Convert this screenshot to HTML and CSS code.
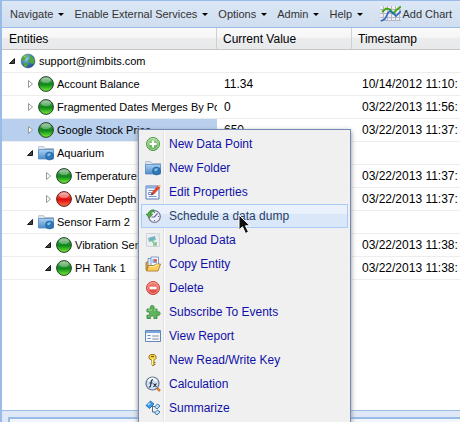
FILE: index.html
```html
<!DOCTYPE html>
<html lang="en">
<head>
<meta charset="utf-8">
<title>Entities</title>
<link rel="stylesheet" href="styles.css">
</head>
<body>
<svg class="defs" aria-hidden="true">
  <defs>
    <linearGradient id="gGreen" x1="0" y1="0" x2="0" y2="1"><stop offset="0" stop-color="#8fc08f"/><stop offset=".4" stop-color="#1d8a2a"/><stop offset=".55" stop-color="#0f8a1a"/><stop offset="1" stop-color="#7af23a"/></linearGradient>
    <linearGradient id="gRed" x1="0" y1="0" x2="0" y2="1"><stop offset="0" stop-color="#f5a09a"/><stop offset=".4" stop-color="#e62a20"/><stop offset=".55" stop-color="#e00c08"/><stop offset="1" stop-color="#ff7a50"/></linearGradient>
    <linearGradient id="gFolder" x1="0" y1="0" x2="0" y2="1"><stop offset="0" stop-color="#a9d0f2"/><stop offset="1" stop-color="#4a8ccc"/></linearGradient>
    <radialGradient id="gSea" cx=".35" cy=".3" r=".8"><stop offset="0" stop-color="#a8d4f4"/><stop offset=".5" stop-color="#3f80c0"/><stop offset="1" stop-color="#1b3f78"/></radialGradient>
    <linearGradient id="gAdd" x1="0" y1="0" x2="0" y2="1"><stop offset="0" stop-color="#a5d895"/><stop offset="1" stop-color="#4fa84a"/></linearGradient>
    <linearGradient id="gDel" x1="0" y1="0" x2="0" y2="1"><stop offset="0" stop-color="#f58a80"/><stop offset="1" stop-color="#d93a32"/></linearGradient>
    <symbol id="green" viewBox="0 0 16 16"><circle cx="8" cy="8" r="7.4" fill="url(#gGreen)" stroke="#26402a" stroke-width="1"/><ellipse cx="8" cy="4.2" rx="4.8" ry="2.8" fill="#fff" opacity=".3"/></symbol>
    <symbol id="red" viewBox="0 0 16 16"><circle cx="8" cy="8" r="7.4" fill="url(#gRed)" stroke="#5c2020" stroke-width="1"/><ellipse cx="8" cy="4.2" rx="4.8" ry="2.8" fill="#fff" opacity=".35"/></symbol>
    <symbol id="folder" viewBox="0 0 16 16"><path d="M.5 14V1.500h5L7 3h8.500V14z" fill="#8294a8"/><path d="M1 2h4.500L7 3.500h8V5H1z" fill="#dce4ec"/><path d="M.5 4.500h15V14H.5z" fill="url(#gFolder)" stroke="#5a8cbc" stroke-width=".8"/><circle cx="11.500" cy="11" r="4" fill="#2e78b8" stroke="#1d5a96" stroke-width=".6"/><path d="M9 9.500q2-2 4-1l-1 2-2 1z" fill="#83bde8"/></symbol>
    <symbol id="globe" viewBox="0 0 16 16"><circle cx="8" cy="8" r="7" fill="url(#gSea)" stroke="#4a6a90" stroke-width=".5"/><path d="M3 3.500 6 1.500l2 1-1 2-2 1.500-.5 2L2 8 1.300 6zM9 2l3 1.500L14.500 7l-.5 3-2 1.500-1.500-2-2-.5L8 7l2-1.500zM4 9.500l3 .5 1 1.500-2 3-2-1.500z" fill="#4fa838"/><path d="M3.500 4 6 2.200l1 .5-2 2z" fill="#9ad470"/></symbol>
    <symbol id="open" viewBox="0 0 16 16"><path d="M10.500 5.500v5h-5z" fill="#444" stroke="#1a1a1a" stroke-width="1" stroke-linejoin="round"/></symbol>
    <symbol id="closed" viewBox="0 0 16 16"><path d="M6.500 4.500v7L10.500 8z" fill="#fff" stroke="#999" stroke-width="1"/></symbol>
    <symbol id="chart" viewBox="0 0 22 16"><path d="M1 0h21v15H1z" fill="#eee"/><path d="M4.500 0v15M8.500 0v15M12.500 0v15M16.500 0v15M20.500 0v15M1 3.500h21M1 7.500h21M1 11.500h21M1 14.500h21" stroke="#b4b4cc" stroke-width="1" fill="none"/><path d="M3 6 7 2.500l4 1 3 4 4-4 4-3" fill="none" stroke="#48a818" stroke-width="2"/><path d="m2 15 4-2 3-6 2-2 3 2 3 3 2-2 3-3" fill="none" stroke="#2468c0" stroke-width="1.600"/></symbol>
    <symbol id="add" viewBox="0 0 16 16"><circle cx="8" cy="8" r="6.500" fill="url(#gAdd)" stroke="#50984a" stroke-width="1"/><circle cx="8" cy="8" r="5.400" fill="none" stroke="#c8e8bc" stroke-width=".7"/><path d="M8 4.500v7M4.500 8h7" stroke="#fff" stroke-width="2.200"/></symbol>
    <symbol id="edit" viewBox="0 0 16 16"><path d="M1 2h13v13H1z" fill="#f4f8ff" stroke="#5279b8" stroke-width="1"/><path d="M1.500 2.500h12v2h-12z" fill="#86a9e0"/><path d="M3.500 6.500h6M3.500 12.500h8" stroke="#7896cc"/><path d="M3.500 8.500h3v2h-3z" fill="none" stroke="#7896cc"/><path d="m6.500 11 .8-2.800 5.500-6.200 2 1.500-5.500 6.200z" fill="#ea4a2a" stroke="#b03018" stroke-width=".5"/><path d="m12.500 2.300 1.200-1.300h1.800v1.300l-1 1.200z" fill="#ffae8a"/><path d="m6.300 11.300.6-2 1.500 1z" fill="#333"/></symbol>
    <symbol id="clock" viewBox="0 0 16 16"><circle cx="9.500" cy="8.500" r="5.800" fill="#f1f1fa" stroke="#7c7c9e" stroke-width="1.300"/><path d="M9.500 4v1M9.500 12v1M13 8.500h1M12.500 5.500 9.500 9h-3" stroke="#6868a0" stroke-width="1.200" fill="none"/><path d="M1 6h2C3.500 3 6 1.500 9 1.800v2C7 3.600 6 4.500 5.800 6h2L4.300 10z" fill="#54a842" stroke="#2d7828" stroke-width=".6"/></symbol>
    <symbol id="upload" viewBox="0 0 16 16"><path d="M1.500 1.500h13v13h-13z" fill="#eceff2" stroke="#d2d5d8"/><path d="M10 1.500h4.500V6z" fill="#d9e2ea"/><path d="m3 6 7-2 1 4-7 2z" fill="#79bda8"/><path d="m4.500 6 4-1 .5 2-4 1z" fill="#6ea8dc"/><path d="m7 9 4 4M11 10v3H8" stroke="#86c294" stroke-width="1.700" fill="none"/></symbol>
    <symbol id="copy" viewBox="0 0 16 16"><path d="M1 6.500 4.500 5v9L1 14z" fill="#e1a630" stroke="#94651c" stroke-width=".7"/><path d="M3 2.500h7v9H3z" fill="#e0e9f8" stroke="#6688bb" stroke-width=".8"/><path d="M6 1h7.500v9H6z" fill="#f5f9ff" stroke="#6688bb" stroke-width=".8"/><path d="M7.500 3h4.500v4H7.500z" fill="#85a8dc"/><circle cx="10.500" cy="4.500" r="1.400" fill="#e45b3e"/><path d="M3.500 9.500H9L10.500 8h5L13 15H1.500z" fill="#f8cd5c" stroke="#a5701f" stroke-width=".8"/><path d="M4.500 10.500h5L11 9h3" fill="none" stroke="#fff0a8"/></symbol>
    <symbol id="delete" viewBox="0 0 16 16"><circle cx="8" cy="8" r="6.500" fill="url(#gDel)" stroke="#c8433c"/><circle cx="8" cy="8" r="5.400" fill="none" stroke="#f8b4ac" stroke-width=".7"/><path d="M4.500 8h7" stroke="#fff" stroke-width="2.600"/></symbol>
    <symbol id="plugin" viewBox="0 0 16 16"><path d="M2 5h4C4.500 3 5.500 1.500 7.200 1.500S9.800 3 8.500 5H12v3.200c1.700-1.200 3.200-.2 3.200 1.300S13.700 12 12 10.800V14.500H8.800c1-2-.2-2.500-1.600-2.500s-2.400.7-1.500 2.500H2V11c2 1 2.500-.3 2.500-1.400S3.700 7.200 2 8z" fill="#60b55c" stroke="#3f8a42" stroke-width=".9"/><path d="M3 6h4M9 6h2" stroke="#a3dc98"/></symbol>
    <symbol id="report" viewBox="0 0 16 16"><path d="M.5 2.500h15v11H.5z" fill="#f6f8fa" stroke="#6088b4"/><path d="M1 3h14v2H1z" fill="#7ba5dc"/><path d="M2.500 7.500h3M2.500 10.500h3" stroke="#5f88c4"/><path d="M7.500 7.500h6v1h-6zM7.500 10.500h6v1h-6z" fill="#fff" stroke="#b0b4bc" stroke-width=".8"/></symbol>
    <symbol id="key" viewBox="0 0 16 16"><path d="M5.500 2.500h4l1.500 1.500v2.500L9 8.500V13l-1 1-1-1V8.500L4 6.500V4z" fill="#f3d64c" stroke="#8c7118" stroke-width=".9"/><path d="M6 4.500h3" stroke="#7b6016" stroke-width="1.200"/><path d="M7.500 7v6" stroke="#fff5a6"/><path d="M9 10.500h1.500M9 12.500h1.500" stroke="#8c7118"/></symbol>
    <symbol id="calc" viewBox="0 0 16 16"><path d="m12 12 3 3" stroke="#d98028" stroke-width="2.500"/><circle cx="7.500" cy="7.500" r="6.500" fill="#cfe0f4" stroke="#65758e" stroke-width="1.200"/><path d="M3 5q4-5 9 0" fill="none" stroke="#f6faff" stroke-width="2"/><path d="M8 4C6.500 3.500 6.300 5 6 7s-.4 4.500-2 4M4.500 7h3M8.500 7.500l3 3.500M11.500 7.500l-3 3.500" fill="none" stroke="#20293c" stroke-width="1.100"/></symbol>
    <symbol id="tree" viewBox="0 0 16 16"><path d="M6 6.500h4M7.500 6v6H10" fill="none" stroke="#566e88"/><path d="m1 5.500 4.500-4.500 3.500 3-4.500 4.500z" fill="#3d9ae8" stroke="#1763ac" stroke-width=".8"/><path d="m3 5 2-2" stroke="#bfe2ff" stroke-width="1.200"/><path d="m9.500 7 3-3 2.500 2-3 3zM9.500 13l3-3 2.500 2-3 3z" fill="#bde0fc" stroke="#2d6da4" stroke-width=".9"/></symbol>
  </defs>
</svg>

<div class="app">
  <nav class="toolbar" aria-label="Main">
    <button class="tool" type="button">Navigate<span class="caret"></span></button>
    <button class="tool" type="button">Enable External Services<span class="caret"></span></button>
    <button class="tool" type="button">Options<span class="caret"></span></button>
    <button class="tool" type="button">Admin<span class="caret"></span></button>
    <button class="tool" type="button">Help<span class="caret"></span></button>
    <span class="divider"></span>
    <button class="tool tool-chart" type="button"><svg class="chart-icon"><use href="#chart"/></svg>Add Chart</button>
  </nav>

  <main class="grid">
    <table class="entities">
      <colgroup><col class="col-name"><col class="col-value"><col></colgroup>
      <thead><tr><th>Entities</th><th>Current Value</th><th>Timestamp</th></tr></thead>
      <tbody>
        <tr><td><div class="node"><svg class="icon"><use href="#open"/></svg><svg class="icon"><use href="#globe"/></svg><span>support@nimbits.com</span></div></td><td></td><td></td></tr>
        <tr><td><div class="node level-1"><svg class="icon"><use href="#closed"/></svg><svg class="icon"><use href="#green"/></svg><span>Account Balance</span></div></td><td>11.34</td><td>10/14/2012 11:10:</td></tr>
        <tr><td><div class="node level-1"><svg class="icon"><use href="#closed"/></svg><svg class="icon"><use href="#green"/></svg><span>Fragmented Dates Merges By Po</span></div></td><td>0</td><td>03/22/2013 11:56:</td></tr>
        <tr><td class="selected"><div class="node level-1"><svg class="icon"><use href="#closed"/></svg><svg class="icon"><use href="#green"/></svg><span>Google Stock Price</span></div></td><td>650</td><td>03/22/2013 11:37:</td></tr>
        <tr><td><div class="node level-1"><svg class="icon"><use href="#open"/></svg><svg class="icon"><use href="#folder"/></svg><span>Aquarium</span></div></td><td></td><td></td></tr>
        <tr><td><div class="node level-2"><svg class="icon"><use href="#closed"/></svg><svg class="icon"><use href="#green"/></svg><span>Temperature</span></div></td><td></td><td>03/22/2013 11:37:</td></tr>
        <tr><td><div class="node level-2"><svg class="icon"><use href="#closed"/></svg><svg class="icon"><use href="#red"/></svg><span>Water Depth</span></div></td><td></td><td>03/22/2013 11:37:</td></tr>
        <tr><td><div class="node level-1"><svg class="icon"><use href="#open"/></svg><svg class="icon"><use href="#folder"/></svg><span>Sensor Farm 2</span></div></td><td></td><td></td></tr>
        <tr><td><div class="node level-2"><svg class="icon"><use href="#open"/></svg><svg class="icon"><use href="#green"/></svg><span>Vibration Sen</span></div></td><td></td><td>03/22/2013 11:38:</td></tr>
        <tr><td><div class="node level-2"><svg class="icon"><use href="#open"/></svg><svg class="icon"><use href="#green"/></svg><span>PH Tank 1</span></div></td><td></td><td>03/22/2013 11:38:</td></tr>
      </tbody>
    </table>
  </main>
  <footer class="dock"><div class="dock-panel"></div></footer>
</div>

<div class="menu">
  <button class="item" type="button"><svg class="icon"><use href="#add"/></svg>New Data Point</button>
  <button class="item" type="button"><svg class="icon"><use href="#folder"/></svg>New Folder</button>
  <button class="item" type="button"><svg class="icon"><use href="#edit"/></svg>Edit Properties</button>
  <button class="item active" type="button"><svg class="icon"><use href="#clock"/></svg>Schedule a data dump</button>
  <button class="item" type="button"><svg class="icon"><use href="#upload"/></svg>Upload Data</button>
  <button class="item" type="button"><svg class="icon"><use href="#copy"/></svg>Copy Entity</button>
  <button class="item" type="button"><svg class="icon"><use href="#delete"/></svg>Delete</button>
  <button class="item" type="button"><svg class="icon"><use href="#plugin"/></svg>Subscribe To Events</button>
  <button class="item" type="button"><svg class="icon"><use href="#report"/></svg>View Report</button>
  <button class="item" type="button"><svg class="icon"><use href="#key"/></svg>New Read/Write Key</button>
  <button class="item" type="button"><svg class="icon"><use href="#calc"/></svg>Calculation</button>
  <button class="item" type="button"><svg class="icon"><use href="#tree"/></svg>Summarize</button>
</div>
<svg class="pointer" viewBox="0 0 14 21" aria-hidden="true"><path d="M1 1v15l3.500-3.200L7.500 19.500l3-1.400-3-6.300H12z" fill="#111" stroke="#fff" stroke-width="1"/></svg>
</body>
</html>
```
FILE: styles.css
```css
* { box-sizing: border-box; }

body {
  margin: 0;
  height: 100vh;
  overflow: hidden;
  position: relative;
  background: #fff;
  color: #000;
  font: 11px/16px "Liberation Sans", Arial, sans-serif;
}

button {
  margin: 0;
  padding: 0;
  border: 0;
  background: none;
  font: inherit;
  color: inherit;
  white-space: nowrap;
  cursor: default;
}

.defs { position: absolute; width: 0; height: 0; }
.icon { display: block; flex: none; width: 16px; height: 16px; }

.app {
  height: 100%;
  display: flex;
  flex-direction: column;
  border-left: 2px solid #99bbe8;
}

.toolbar {
  flex: none;
  display: flex;
  align-items: center;
  gap: 10px;
  height: 28px;
  padding: 0 8px;
  border-top: 1px solid #99bbe8;
  border-bottom: 1px solid #99bbe8;
  background: linear-gradient(#dbe7f5, #cfdef0);
  color: #333;
}

.tool { display: flex; align-items: center; gap: 5px; }

.caret {
  border: 3px solid transparent;
  border-top: 3px solid #000;
  border-bottom: 0;
}

.divider { width: 3px; height: 14px; margin: 0 -4px 0 -2px; background: #dfe2e5; }
.tool-chart { gap: 1px; }
.chart-icon { width: 22px; height: 16px; }

.grid { flex: 1; overflow: hidden; }

.entities {
  width: 100%;
  table-layout: fixed;
  border-collapse: separate;
  border-spacing: 0;
  font-size: 12px;
}

.col-name { width: 215px; }
.col-value { width: 135px; }

th, td {
  overflow: hidden;
  padding: 0 0 0 7px;
  text-align: left;
  font-weight: normal;
  white-space: nowrap;
}

th {
  height: 22px;
  padding-left: 6px;
  border-right: 1px solid #d0d0d0;
  border-bottom: 1px solid #c5c5c5;
  background: linear-gradient(#f9f9f9, #f6f6f6 45%, #ebecee 46%, #e8e9eb);
}

th:first-child { padding-left: 7px; }
th:last-child { border-right: 0; }
td { height: 23px; border-bottom: 1px solid #ededed; }
td:last-child { overflow: visible; padding-left: 10px; }
td:first-child { padding-left: 2px; font-size: 11px; }
.selected { background: #b8cfee; }

.node { display: flex; align-items: center; }
.node span { margin-left: 3px; }
.level-1 { padding-left: 18px; }
.level-2 { padding-left: 36px; }

.dock {
  flex: none;
  height: 12px;
  padding: 6px 0 0 6px;
  border-top: 1px solid #99bbe8;
  background: #dfe8f6;
}

.dock-panel {
  height: 5px;
  border-top: 2px solid #99bbe8;
  border-left: 2px solid #99bbe8;
  background: #f1f6fc;
}

.menu {
  position: absolute;
  top: 129px;
  left: 138px;
  bottom: 0;
  width: 213px;
  padding: 2px 2px 0;
  border: 1px solid #718bb7;
  border-bottom: 0;
  background: linear-gradient(90deg, #f0f0f0 24px, #e0e0e0 24px, #e0e0e0 25px, #fff 25px, #fff 26px, #f0f0f0 26px);
  box-shadow: 0 2px 5px #888;
}

.item {
  display: flex;
  align-items: center;
  gap: 8px;
  width: 100%;
  height: 24px;
  padding: 0 3px;
  border: 1px solid transparent;
  color: #1010a8;
  font-size: 12px;
}

.active {
  border-color: #a9cbf5;
  background: linear-gradient(#e9f2fc 42%, #d9e7f8 43%);
  color: #2a4066;
}

.pointer {
  position: absolute;
  top: 214px;
  left: 238px;
  width: 14px;
  height: 21px;
}
```
